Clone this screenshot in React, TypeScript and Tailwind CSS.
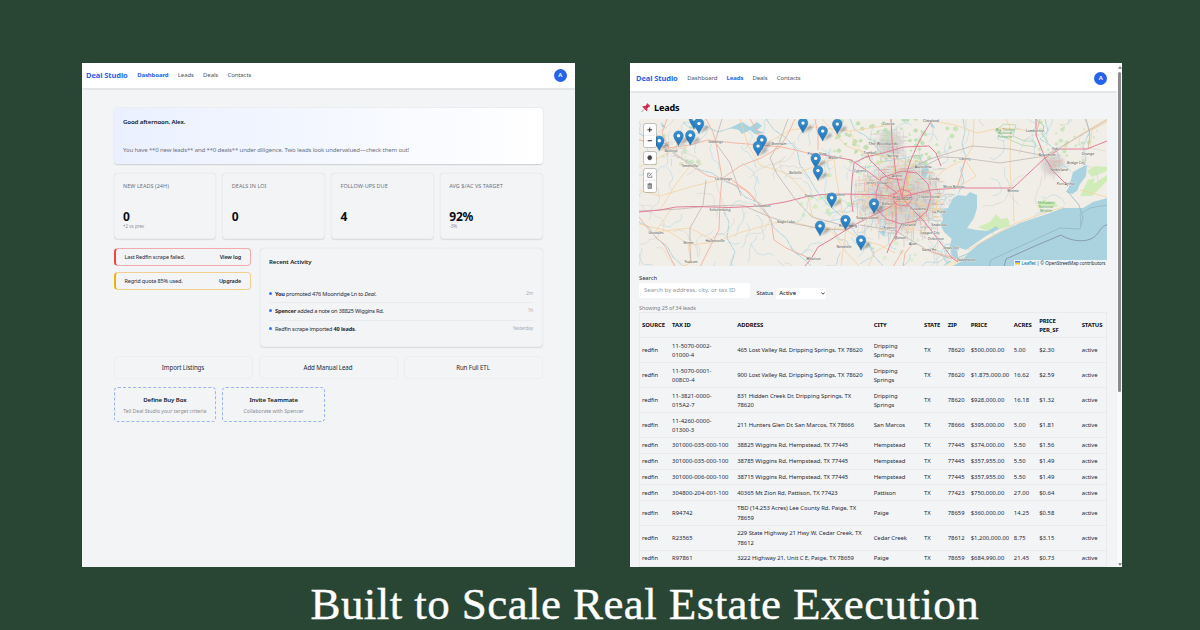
import React from "react";

/* ---------- shared header ---------- */

const NAV = ["Dashboard", "Leads", "Deals", "Contacts"];

function Header({ active, className, navGap }: { active: string; className: string; navGap: string }) {
  return (
    <header className={`flex shrink-0 items-center border-b border-[#e3e5e8] bg-white shadow-[0_0.5px_1px_rgba(0,0,0,0.06)] ${className}`}>
      <span className="text-[7.500px] font-bold tracking-[-0.080px] text-[#2563eb]">Deal Studio</span>
      <nav className={`ml-[9.500px] flex text-[6px] ${navGap}`}>
        {NAV.map((n) => (
          <span key={n} className={n === active ? "font-bold tracking-[-0.12px] text-[#2563eb]" : "tracking-[-0.1px] text-[#4b5563]"}>
            {n}
          </span>
        ))}
      </nav>
      <span className="ml-auto flex h-[12.6px] w-[12.6px] items-center justify-center rounded-full bg-[#2563eb] text-[6px] font-semibold text-white">
        A
      </span>
    </header>
  );
}

/* ---------- dashboard ---------- */

const STATS = [
  { label: "NEW LEADS (24H)", value: "0", note: "+2 vs prev" },
  { label: "DEALS IN LOI", value: "0", note: "" },
  { label: "FOLLOW-UPS DUE", value: "4", note: "" },
  { label: "AVG $/AC VS TARGET", value: "92%", note: "-3%" },
];

const CARD = "rounded-[4px] border border-[#eceef0] bg-[#f3f4f6] shadow-[0_0.7px_1.2px_rgba(0,0,0,0.11)]";

function Alert({ text, action, className }: { text: string; action: string; className: string }) {
  return (
    <div className={`flex h-[18px] items-center justify-between rounded-[4px] border border-l-2 pt-[1px] pr-[8.5px] pl-[9px] text-[5.500px] tracking-[-0.150px] text-[#1f2937] ${className}`}>
      <span>{text}</span>
      <span className="font-semibold">{action}</span>
    </div>
  );
}

function Activity({ children, when, last }: { children: React.ReactNode; when: string; last?: boolean }) {
  return (
    <li className={`flex h-[17.4px] items-center ${last ? "" : "border-b border-[#e9ebee]"}`}>
      <span className="mr-[2.6px] mb-[2px] h-[3.4px] w-[3.4px] rounded-full bg-[#3b6ff5]" />
      <span className="text-[5.6px] tracking-[-0.190px] text-[#1f2937]">{children}</span>
      <span className="mb-[1.5px] ml-auto text-[4.6px] tracking-[-0.080px] text-[#a6abb4]">{when}</span>
    </li>
  );
}

function Dashboard() {
  return (
    <section className="flex h-[504px] w-[493.5px] flex-col overflow-hidden bg-[#f3f4f6]">
      <Header active="Dashboard" className="h-[26px] pt-[0.500px] pr-[8.500px] pl-[4.5px]" navGap="gap-[9.3px]" />
      <div className="flex flex-col pt-[18.5px] pr-[32.5px] pl-[32px]">
        <div className="h-[56px] rounded-[4px] bg-linear-to-r from-[#eaf0ff] to-white px-[9.5px] shadow-[0_0.7px_1.4px_rgba(0,0,0,0.16)]">
          <p className="pt-[10px] text-[6.100px] leading-[8px] font-semibold tracking-[-0.120px] text-[#111827]">Good afternoon, Alex.</p>
          <p className="pt-[20px] text-[6px] leading-[8px] tracking-[-0.130px] text-[#6b7280]">
            You have **0 new leads** and **0 deals** under diligence. Two leads look undervalued—check them out!
          </p>
        </div>

        <div className="mt-[9px] grid grid-cols-4 gap-[6px]">
          {STATS.map((s) => (
            <div key={s.label} className={`h-[66px] px-[8.5px] ${CARD}`}>
              <p className="pt-[8.500px] text-[5.500px] leading-[8px] tracking-[0.030px] whitespace-nowrap text-[#6b7280]">{s.label}</p>
              <p className="pt-[19.500px] text-[12px] leading-[14px] font-bold tracking-[-0.2px] text-[#0b0f19]">{s.value}</p>
              <p className="text-[4.6px] leading-[5px] tracking-[-0.050px] text-[#8b919c]">{s.note}</p>
            </div>
          ))}
        </div>

        <div className="mt-[9px] grid grid-cols-[137px_283px] gap-[9px]">
          <div className="flex flex-col gap-[6px]">
            <Alert text="Last Redfin scrape failed." action="View log" className="border-[#f3a9ae] border-l-[#ef4444]" />
            <Alert text="Regrid quota 85% used." action="Upgrade" className="border-[#f2cf8c] border-l-[#eab308]" />
          </div>
          <div className={`h-[99px] px-[8.5px] ${CARD}`}>
            <p className="pt-[9.500px] text-[6px] leading-[8px] font-semibold tracking-[-0.080px] text-[#111827]">Recent Activity</p>
            <ul className="pt-[20px]">
              <Activity when="2m"><b>You</b> promoted 476 Moonridge Ln to <i>Deal</i>.</Activity>
              <Activity when="1h"><b>Spencer</b> added a note on 38825 Wiggins Rd.</Activity>
              <Activity when="Yesterday" last>Redfin scrape imported <b>40 leads</b>.</Activity>
            </ul>
          </div>
        </div>

        <div className="mt-[9px] grid grid-cols-3 gap-[6px]">
          {["Import Listings", "Add Manual Lead", "Run Full ETL"].map((t) => (
            <button key={t} className="h-[23px] rounded-[4px] border border-[#eceef0] pt-[0.500px] text-[6.2px] tracking-[-0.120px] text-[#1f2937]">
              {t}
            </button>
          ))}
        </div>

        <div className="mt-[8.5px] grid grid-cols-4 gap-[6px] text-center">
          {[
            ["Define Buy Box", "Tell Deal Studio your target criteria"],
            ["Invite Teammate", "Collaborate with Spencer"],
          ].map(([t, d]) => (
            <div key={t} className="h-[35px] rounded-[4px] border border-dashed border-[#9db4f7] pt-[7.5px] whitespace-nowrap">
              <p className="text-[6.1px] leading-[8px] font-semibold tracking-[-0.120px] text-[#111827]">{t}</p>
              <p className="pt-[3.5px] text-[5.2px] leading-[8px] tracking-[-0.04px] text-[#868c97]">{d}</p>
            </div>
          ))}
        </div>
      </div>
    </section>
  );
}

/* ---------- map ---------- */

const PINS: [number, number][] = [
  [694, 129], [699, 133.5], [803, 133], [837.3, 134], [822.7, 141], [659.3, 150.7], [690.3, 145.2],
  [678.5, 145.7], [761.8, 149.8], [758, 156], [815.7, 168.3], [818, 180.5], [831.7, 207.7],
  [874, 213.5], [845.5, 230], [820, 235.8], [861, 250.2],
];

const LABELS: [number, number, string, number?][] = [
  [883, 144.5, "The Woodlands", 4], [671, 152.3, "Bastrop"], [690, 166.5, "Smithville"], [715.5, 142.5, "Giddings"],
  [723.5, 179.5, "La Grange"], [779, 144.5, "Brenham"], [817, 154.5, "Prairie View"], [833.5, 158.5, "Waller"],
  [795.5, 174, "Bellville"], [870, 154, "Tomball"], [892.5, 157, "Spring"], [860, 172, "Cypress"], [888.5, 124.5, "Conroe"],
  [931, 122, "Cleveland"], [923, 167.5, "Atascocita"], [897, 176.5, "Aldine"], [934, 179.5, "Crosby"], [965, 159.5, "Liberty"],
  [954, 187.5, "Mont Belvieu"], [1013, 191.5, "Winnie"], [1035, 132, "Lumberton"], [1047, 156, "Beaumont"], [1056, 150, "Vidor"],
  [1088, 155, "Orange"], [1076, 163.5, "Bridge City"], [1059, 171, "Nederland"], [1066, 185, "Port Arthur"],
  [720, 210.5, "Schulenburg"], [762, 206.5, "Columbus"], [809, 197, "Sealy"], [836, 196, "Brookshire"], [786, 222.5, "Eagle Lake"],
  [656, 233.5, "Gonzales"], [688.5, 244, "Shiner"], [715, 242, "Hallettsville"], [691, 262.5, "Yoakum"],
  [844, 248, "Needville"], [813.5, 259.5, "Wharton"], [848, 227, "Rosenberg"], [867, 218.5, "Sugar Land", 4],
  [902, 200, "Houston", 4.8], [918, 209.5, "Pasadena"], [929, 197.5, "Channelview"], [939, 212.5, "La Porte"],
  [908, 226, "Pearland"], [939, 226, "Seabrook"], [930, 233.5, "League City"], [889, 229, "Fresno"], [936, 240, "Dickinson"],
  [900, 239, "Manvel"], [913, 245, "Alvin"], [929, 251, "Santa Fe"], [951, 249, "Texas City"], [966, 260.5, "Galveston", 4],
  [877, 183.5, "Jersey Village"], [888, 205, "Bellaire"],
];

const MOTORWAYS = [
  "M639 212 L660 210 L676 207 L695 206.500 L730 207.500 L761 206 L785 202 L805 197 L822 194.500 L841 194 L872 194.500 L902 197 L930 190 L957 188 L1013 188 L1030 172 L1045 158 L1060 149 L1087 149 L1097 145 L1107 141",
  "M891 119 L892 140 L894 158 L896 175 L902 197 L912 209 L923 220 L937 238 L952 258 L958 262",
  "M932 120 L922 136 L916 148 L910 162 L905 180 L902 197 L890 207 L876 214 L858 223 L846 230 L830 240 L818 247 L811 259 L804 267",
  "M808 153 L830 156 L851 160 L866 170 L882 182 L897 193",
  "M902 171 L917 173 L928 184 L931 197 L927 211 L916 221 L901 224 L886 219 L877 209 L876 192 L881 178 Z",
  "M902 189 L910 192 L912 199 L908 205 L900 206 L894 202 L894 194 Z",
  "M853 212 L851 197 L852 180 L854 163 L866 157 L883 153 L904 147 L929 146 L936 153 L941 166",
  "M902 224 L890 245 L887 253", "M896 203 L896 240", "M902 180 L888 178 L870 160 L868 154", "M1036 119 L1036 135 L1045 158 L1054 172 L1068 186",
];
const TRUNKS = [
  "M668 148 L690 145 L708 140 L735 143 L761 145 L782 147 L808 153", "M639 140 L655 143 L672 151 L690 165 L708 176 L723 179 L745 190 L761 206",
  "M706 119 L713 132 L716 143 L719 160 L722 178 L720 200 L719 230 L712 243 L700 267", "M815 119 L818 135 L818 150",
  "M667 119 L662 133 L669 148", "M732 180 L750 193 L771 220 L774 240 L786 248 L809 258", "M720 180 L740 166 L761 158 L780 147 L788 134 L795 119",
  "M639 217 L650 231 L665 246 L675 267", "M750 119 L758 132 L762 146", "M903 250 L893 267 M912 245 L905 253 L903 267", "M1036 135 L1040 119",
  "M929 251 L955 258", "M957 188 L962 172 L965 160",
];
const YELLOWS = [
  "M639 190 L660 196 L690 187 L723 179", "M655 232 L690 228 L716 242", "M655 232 L665 218 L672 208", "M716 242 L742 232 L774 223",
  "M774 223 L790 221 L812 227 L845 229", "M688 245 L691 263 L680 267", "M740 119 L748 145 L760 165 L788 174 L808 196 L812 215 L834 234 L846 252 L860 267",
  "M762 146 L790 130 L815 127 L850 131 L891 125", "M834 159 L836 176 L839 194 L846 229", "M846 230 L843 250 L841 267", "M795 174 L818 165 L834 159",
  "M932 121 L955 125 L977 133 L1000 128 L1036 131", "M934 179 L947 168 L965 159 L973 146 L974 119", "M1011 187 L1010 160 L1011 130 L1006 119",
  "M1013 188 L1014 222", "M957 188 L976 176 L965 160", "M895 253 L880 245 L861 240 L846 230", "M896 240 L875 252 L868 267", "M639 167 L655 160 L671 151 L690 133 L706 119",
  "M690 166 L676 184 L660 210", "M1060 149 L1081 134 L1107 119", "M1080 190 L1107 197", "M1090 149 L1092 130 L1107 122",
  "M850 131 L856 145 L866 157 M822 119 L846 146 L870 154 L893 158 L923 168", "M968 250 L1014 224 L1050 211 L1064 207",
  "M639 224 L668 231 L690 245 L716 242",
];
const BROWNS = [
  "M885 180 L930 159 L972 146 L1010 149 L1045 156 L1066 144 L1107 120", "M923 167 L942 157 L963 158 L1000 163 L1045 156", "M845 230 L822 229 L786 222 L770 217 L742 205 L708 206 L680 209 L639 211",
  "M788 119 L779 143 L770 158 L777 174 L795 199 L812 217 L845 226", "M706 180 L703 205 L690 228 L690 245 L691 263", "M722 119 L715 142 L730 163 L741 196",
  "M860 225 L896 231 L929 251 L952 259", "M1086 119 L1090 135 L1088 149",
];
const WATERLINES = [
  "M639 133 L650 140 L660 138 L668 147 L676 156 L690 162 L700 170 L712 173 L722 180 L736 186 L745 197 L760 203 L768 215 L774 228 L786 238 L793 251 L805 260 L812 267",
  "M766 119 L774 130 L785 137 L797 150 L800 165 L808 176 L816 190 L826 203 L838 213 L848 222 L856 234 L868 243 L874 256 L884 267",
  "M963 119 L965 131 L962 144 L966 158 L961 171 L964 181 L958 194", "M1045 119 L1048 131 L1040 139 L1050 145 L1058 153 L1060 163 L1071 171",
  "M1085 119 L1090 131 L1083 146 L1086 160 L1083 168", "M639 222 L650 228 L656 238 L667 246 L673 257 L684 267", "M730 267 L735 252 L727 238 L729 222 L724 212",
  "M683 122 L690 128 L705 126 L718 132 L731 128 L748 131", "M850 119 L855 130 L866 136 L878 149 L887 161 L905 158 L918 155 L926 168 L935 183 L940 198",
];

/* deterministic pseudo random source for the minor streams and streets */
function rng(seed: number) {
  let s = seed;
  return () => {
    s = (s * 16807) % 2147483647;
    return s / 2147483647;
  };
}

function wiggles(seed: number, count: number, steps: number, len: number, cx: number, cy: number, rx: number, ry: number) {
  const r = rng(seed);
  let d = "";
  for (let i = 0; i < count; i++) {
    let x = cx + (r() - 0.5) * 2 * rx;
    let y = cy + (r() - 0.5) * 2 * ry;
    let a = r() * Math.PI * 2;
    d += `M${x.toFixed(1)} ${y.toFixed(1)}`;
    for (let k = 0; k < steps; k++) {
      a += (r() - 0.5) * 1.7;
      x += Math.cos(a) * len;
      y += Math.sin(a) * len;
      d += `L${x.toFixed(1)} ${y.toFixed(1)}`;
    }
  }
  return d;
}

function streets(seed: number, count: number, cx: number, cy: number, spread: number) {
  const r = rng(seed);
  let d = "";
  for (let i = 0; i < count; i++) {
    const a = r() * Math.PI * 2;
    const q = Math.pow(r(), 0.8) * spread;
    const x = cx + Math.cos(a) * q;
    const y = cy + Math.sin(a) * q * 0.85;
    const l = 3 + r() * 8;
    d += r() > 0.5 ? `M${x.toFixed(1)} ${y.toFixed(1)}h${l.toFixed(1)}` : `M${x.toFixed(1)} ${y.toFixed(1)}v${l.toFixed(1)}`;
  }
  return d;
}

function blobs(seed: number, count: number, cx: number, cy: number, rx: number, ry: number) {
  const r = rng(seed);
  return Array.from({ length: count }, () => {
    const x = cx + (r() - 0.5) * 2 * rx;
    const y = cy + (r() - 0.5) * 2 * ry;
    const s = 0.8 + r() * 2.2;
    return `M${x.toFixed(1)} ${y.toFixed(1)}l${s.toFixed(1)} ${(-s * 0.6).toFixed(1)}l${(s * 0.9).toFixed(1)} ${s.toFixed(1)}l${(-s * 0.8).toFixed(1)} ${(s * 0.9).toFixed(1)}l${(-s * 1.2).toFixed(1)} ${(-s * 0.4).toFixed(1)}z`;
  }).join("");
}

function Pin({ x, y }: { x: number; y: number }) {
  return (
    <g transform={`translate(${x} ${y})`}>
      <path d="M0 0 L5 -6 C8 -9 11 -7 8 -4 Z" fill="#000" opacity="0.3" filter="url(#soft)" />
      <path d="M0 0 C-1.200 -3.600 -4.800 -6.600 -4.800 -10 A4.800 4.800 0 0 1 4.800 -10 C4.800 -6.600 1.200 -3.600 0 0 Z" fill="url(#pin)" stroke="#2b74ad" strokeWidth="0.5" />
      <circle cy="-9.900" r="1.700" fill="#fff" />
    </g>
  );
}

function MapCanvas() {
  return (
    <svg viewBox="639 119 468 147" className="block h-[147px] w-[468px]" fill="none" strokeLinejoin="round">
      <defs>
        <linearGradient id="pin" x1="0" y1="0" x2="0" y2="1">
          <stop offset="0" stopColor="#3b92d2" />
          <stop offset="1" stopColor="#1f73b8" />
        </linearGradient>
        <filter id="soft" x="-50%" y="-50%" width="200%" height="200%">
          <feGaussianBlur stdDeviation="0.8" />
        </filter>
        <radialGradient id="urban">
          <stop offset="0" stopColor="#cbc8c5" />
          <stop offset="0.6" stopColor="#dad6d2" stopOpacity="0.85" />
          <stop offset="1" stopColor="#f1eee8" stopOpacity="0" />
        </radialGradient>
      </defs>
      <rect x="639" y="119" width="468" height="147" fill="#f1eee8" />
      <ellipse cx="900" cy="197" rx="54" ry="46" fill="url(#urban)" />
      <ellipse cx="890" cy="145" rx="18" ry="20" fill="url(#urban)" />
      <ellipse cx="1052" cy="164" rx="16" ry="16" fill="url(#urban)" />
      <path d={blobs(11, 60, 880, 140, 45, 22)} fill="#c3e0b5" />
      <path d={blobs(21, 26, 865, 180, 42, 30)} fill="#d0ebbb" />
      <path d={blobs(31, 26, 930, 155, 30, 32)} fill="#c8e3b9" />
      <path d={blobs(41, 22, 672, 146, 28, 22)} fill="#d3e6c4" />
      <path d={blobs(51, 26, 1070, 140, 32, 20)} fill="#cde5bd" />
      <path d={blobs(61, 16, 815, 205, 16, 10)} fill="#d7ecc9" />
      <path d={blobs(71, 12, 905, 250, 40, 14)} fill="#dcecce" />
      <path d="M978 227 L990 222 L996 214 L1001 219 L1008 218 L1010 226 L990 232 Z M1037 206 L1044 199 L1049 203 L1055 201 L1058 207 Z M1080 196 L1088 180 L1095 178 L1093 184 L1107 175 L1107 181 L1092 196 Z M1087 171 L1095 166 L1107 167 L1107 171 L1092 177 Z" fill="#d0ecb9" />
      <path d="M995 131 L1004 124 L1016 125 L1013 136 L1024 141 L1034 141 L1036 147 L1022 145 L1008 139 Z" stroke="#b4dab3" strokeWidth="0.900" />
      <path d="M1036 119 L1044 126 L1042 134 L1048 142" stroke="#a0d4a5" strokeWidth="1" />
      <path d={wiggles(5, 90, 9, 3.2, 873, 192, 234, 73)} stroke="#b4d8e3" strokeWidth="0.600" />
      <path d={wiggles(97, 26, 10, 3, 900, 235, 60, 34)} stroke="#aad4e1" strokeWidth="0.700" />
      <path d={wiggles(7, 42, 8, 5, 873, 192, 234, 73)} stroke="#d6d3cd" strokeWidth="0.600" />
      {WATERLINES.map((d) => <path key={d} d={d} stroke="#a3d1de" strokeWidth="0.900" strokeDasharray="5 0.6 2 0.4" />)}
      <path d="M742 122 L750 127 L757 122 L762 126 L757 130 L765 133 L755 134 L750 130 L742 134 L738 129 L730 128 Z M922 168 L927 164 L929 171 L925 178 L921 175 Z M930 120 L935 128 L931 127 Z M880 232 L886 230 L884 236 Z M661 122 L666 128 L662 127 Z" fill="#a7d2df" />
      <path d="M953 198 L958 195 L966 196 L970 192 L977 195 L977 208 L974 218 L967 228 L976 230 L988 231 L996 226 L999 229 L986 236 L976 243 L966 250 L957 247 L958 257 L968 253 L980 243 L1000 232 L1020 223 L1050 213 L1063 208 L1083 208 L1093 202 L1107 198 L1107 267 L942 267 L948 261 L957 262 L951 254 L950 246 L952 239 L944 232 L940 224 L943 220 L941 210 L948 208 Z" fill="#aad3df" />
      <path d="M1069 187 L1073 172 L1080 168 L1087 165 L1086 176 L1080 184 L1077 191 L1072 194 L1066 192 Z" fill="#aad3df" />
      <path d="M942 267 L952 261 L968 254 L960 262 L951 267 Z" fill="#f1e9cf" />
      <path d="M989 267 L991 260 L1010 251 L1034 240 L1060 228 L1080 229 L1083 218 L1079 205 L1068 192" stroke="#90aebf" strokeWidth="0.700" />
      <path d="M1004 267 L1006 259 L1035 246 L1061 235 C1070 241 1090 245 1098 233 C1101 228 1104 225 1107 225" stroke="#8793ad" strokeWidth="0.900" />
      <path d="M1081 226 L1080 214 L1090 208 L1107 205" stroke="#90aebf" strokeWidth="0.600" />
      <path d={streets(3, 340, 900, 196, 50)} stroke="#bfbbb8" strokeWidth="0.500" />
      <path d={streets(13, 130, 898, 196, 45)} stroke="#f4cf96" strokeWidth="0.700" />
      <path d={streets(23, 70, 898, 196, 38)} stroke="#ee9f93" strokeWidth="0.600" />
      <path d={streets(33, 50, 888, 143, 22)} stroke="#c9c6c2" strokeWidth="0.500" />
      <path d={streets(43, 30, 1052, 164, 13)} stroke="#dcbdb6" strokeWidth="0.500" />
      <path d={streets(53, 22, 670, 148, 14)} stroke="#c9c6c2" strokeWidth="0.500" />
      {YELLOWS.map((d) => <path key={d} d={d} stroke="#f6d2a0" strokeWidth="0.800" />)}
      {BROWNS.map((d) => <path key={d} d={d} stroke="#bbafa9" strokeWidth="0.700" />)}
      {TRUNKS.map((d) => <path key={d} d={d} stroke="#f4b09e" strokeWidth="0.900" />)}
      {MOTORWAYS.map((d) => <path key={d} d={d} stroke="#e27f97" strokeWidth="1" />)}
      <g textAnchor="middle" fill="#4a4a4a" className="font-['Noto_Sans']">
        {LABELS.map(([x, y, t, s]) => (
          <text key={t} x={x} y={y} fontSize={s ?? 3.5} stroke="#f7f5f0" strokeWidth="0.500" paintOrder="stroke">{t}</text>
        ))}
        <g fill="#55a455" fontSize="3.600">
          <text x="1005" y="130.500">Big Thicket</text>
          <text x="1005" y="134">National</text>
          <text x="1005" y="137.500">Preserve</text>
          <text x="1046" y="204">McFaddin</text>
          <text x="1046" y="208">National</text>
          <text x="1046" y="212">Wildlife</text>
        </g>
      </g>
      {PINS.map(([x, y]) => <Pin key={`${x}-${y}`} x={x} y={y} />)}
    </svg>
  );
}

const CTRL = "flex w-[11.5px] flex-col items-center rounded-[1.5px] bg-white shadow-[0_0_0_0.7px_rgba(0,0,0,0.25)] text-[#222]";

function LeadMap() {
  return (
    <div className="relative h-[147px] w-[468px] overflow-hidden">
      <MapCanvas />
      <div className="absolute top-[5px] left-[5px] flex flex-col gap-[5.5px]">
        <div className={`h-[22.5px] ${CTRL}`}>
          <svg viewBox="0 0 12 22.500" className="h-full w-full" stroke="#222" strokeWidth="1">
            <path d="M3.600 5.600h4.800M6 3.200v4.800M3.800 17h4.400" />
            <path d="M0 11.300h12" stroke="#ccc" strokeWidth="0.500" />
          </svg>
        </div>
        <div className={`h-[11.5px] ${CTRL}`}>
          <svg viewBox="0 0 12 12" className="h-full w-full">
            <path d="M4.800 3.900 H7.200 L8.300 6 L7.200 8.100 H4.800 L3.700 6 Z" fill="#444" stroke="#444" strokeWidth="0.600" strokeLinejoin="round" />
          </svg>
        </div>
        <div className={`h-[22.5px] ${CTRL}`}>
          <svg viewBox="0 0 12 22.500" className="h-full w-full" fill="none" stroke="#555" strokeWidth="0.700">
            <path d="M8.200 6.200v2H3.900V3.900h2.600M5.500 6.800 8.400 3.500" />
            <path d="M0 11.300h12" stroke="#ccc" strokeWidth="0.500" />
            <path d="M4.200 15.600h3.600v4.200H4.200zM3.600 15.100h4.800M5.400 16v3.400M6.600 16v3.400M5.300 14.400h1.400" />
          </svg>
        </div>
      </div>
      <div className="absolute right-0 bottom-0 flex h-[6.3px] items-center bg-white/80 px-[1.5px] text-[4.7px] leading-none tracking-[-0.120px] whitespace-nowrap text-[#333]">
        <svg viewBox="0 0 12 8" className="mr-[1.5px] h-[3.5px] w-[5px]">
          <path fill="#4c7be1" d="M0 0h12v4H0z" />
          <path fill="#ffd500" d="M0 4h12v3H0z" />
          <path fill="#e0bc00" d="M0 7h12v1H0z" />
        </svg>
        <span className="text-[#0078a8]">Leaflet</span>
        <span>&nbsp;| © OpenStreetMap contributors</span>
      </div>
    </div>
  );
}

/* ---------- leads table ---------- */

const HEAD = ["SOURCE", "TAX ID", "ADDRESS", "CITY", "STATE", "ZIP", "PRICE", "ACRES", "PRICE PER_SF", "STATUS"];

const ROWS: string[][] = [
  ["11-5070-0002-\n01000-4", "465 Lost Valley Rd, Dripping Springs, TX 78620", "Dripping\nSprings", "78620", "$500,000.00", "5.00", "$2.30"],
  ["11-5070-0001-\n008C0-4", "900 Lost Valley Rd, Dripping Springs, TX 78620", "Dripping\nSprings", "78620", "$1,875,000.00", "16.62", "$2.59"],
  ["11-3821-0000-\n015A2-7", "831 Hidden Creek Dr, Dripping Springs, TX\n78620", "Dripping\nSprings", "78620", "$928,000.00", "16.18", "$1.32"],
  ["11-4260-0000-\n01300-3", "211 Hunters Glen Dr, San Marcos, TX 78666", "San Marcos", "78666", "$395,000.00", "5.00", "$1.81"],
  ["301000-035-000-100", "38825 Wiggins Rd, Hempstead, TX 77445", "Hempstead", "77445", "$374,000.00", "5.50", "$1.56"],
  ["301000-035-000-100", "38785 Wiggins Rd, Hempstead, TX 77445", "Hempstead", "77445", "$357,955.00", "5.50", "$1.49"],
  ["301000-006-000-100", "38715 Wiggins Rd, Hempstead, TX 77445", "Hempstead", "77445", "$357,955.00", "5.50", "$1.49"],
  ["304800-204-001-100", "40365 Mt Zion Rd, Pattison, TX 77423", "Pattison", "77423", "$750,000.00", "27.00", "$0.64"],
  ["R94742", "TBD (14.253 Acres) Lee County Rd, Paige, TX\n78659", "Paige", "78659", "$360,000.00", "14.25", "$0.58"],
  ["R23565", "229 State Highway 21 Hwy W, Cedar Creek, TX\n78612", "Cedar Creek", "78612", "$1,200,000.00", "8.75", "$3.15"],
  ["R97861", "3222 Highway 21, Unit C E, Paige, TX 78659", "Paige", "78659", "$684,990.00", "21.45", "$0.73"],
];

const COLS = "grid grid-cols-[30px_65.200px_136.500px_50.300px_23.700px_23px_43.200px_25.300px_42.500px_1fr] items-center pt-[1px] pl-[2px] leading-[9.300px]";

function LeadsTable() {
  return (
    <div className="w-[468px] border-x border-t border-[#e9ebee]">
      <div className={`h-[25px] border-b border-[#e9ebee] text-[5.900px] font-bold tracking-[-0.050px] text-[#0b0f19] ${COLS}`}>
        {HEAD.map((h) => (
          <span key={h} className={h === "PRICE PER_SF" ? "w-[24px]" : "whitespace-nowrap"}>{h}</span>
        ))}
      </div>
      {ROWS.map(([tax, addr, city, zip, price, acres, sf], i) => {
        const tall = [tax, addr, city].some((v) => v.includes("\n"));
        return (
          <div key={i} className={`border-b border-[#e9ebee] text-[5.900px] whitespace-pre text-[#1f2937] ${tall ? "h-[25px]" : "h-[15.700px]"} ${COLS}`}>
            {["redfin", tax, addr, city, "TX", zip, price, acres, sf, "active"].map((v, k) => (
              <span key={k} className={k === 1 || k === 6 ? "tracking-[0.010px]" : k === 5 || k === 7 || k === 8 ? "tracking-[0.020px]" : "tracking-[-0.050px]"}>{v}</span>
            ))}
          </div>
        );
      })}
    </div>
  );
}

function Pushpin() {
  return (
    <svg viewBox="0 0 20 20" className="h-[9.500px] w-[9.500px]">
      <path d="M7.500 12.500 1 19" stroke="#8d99a6" strokeWidth="1.600" strokeLinecap="round" />
      <path d="M2.500 7.800 C5 6 7.500 6.300 9 7 L12 3.500 C11.600 2 12.200 0.800 13.500 0.600 L19.400 6.500 C19.200 7.800 18 8.400 16.500 8 L13 11 C13.700 12.500 14 15 12.200 17.500 Z" fill="#dd2e52" />
      <path d="M12 3.500 L16.500 8 L13 11 L9 7 Z" fill="#c92750" />
    </svg>
  );
}

function Leads() {
  return (
    <section className="flex h-[504px] w-[492px] overflow-hidden bg-[#f3f4f6]">
      <div className="flex w-[487px] flex-col overflow-hidden">
        <Header active="Leads" className="h-[29px] pt-[2.500px] pr-[10px] pl-[6px]" navGap="gap-[9.2px]" />
        <div className="flex flex-col pl-[9px]">
          <h1 className="flex h-[27px] items-center gap-[4px] pt-[3.500px] pl-[1.5px] text-[9px] font-bold tracking-[-0.1px] text-black">
            <Pushpin />
            Leads
          </h1>
          <LeadMap />
          <div className="flex h-[33px] items-end gap-[6.500px] text-[5.800px] text-[#1f2937]">
            <label className="flex flex-col gap-[0.500px] pb-[1.500px] leading-[8px] tracking-[-0.050px]">
              Search
              <span className="flex h-[15px] w-[111px] items-center rounded-[2px] bg-white pl-[5px] text-[6px] tracking-[0.010px] text-[#9298a3]">
                Search by address, city, or tax ID
              </span>
            </label>
            <label className="flex items-center gap-[3px]">
              <span className="tracking-[-0.05px]">Status</span>
              <span className="flex h-[11.500px] w-[50px] items-center justify-between bg-white pr-[1.500px] pl-[3px] text-[6px] text-black">
                Active
                <svg viewBox="0 0 8 6" className="h-[3px] w-[4px]" fill="none" stroke="#222" strokeWidth="1.600">
                  <path d="M1 1l3 3.500L7 1" />
                </svg>
              </span>
            </label>
          </div>
          <p className="pt-[5.500px] pb-[0.300px] text-[5.400px] leading-[7.500px] tracking-[-0.060px] text-[#7a808b]">Showing 25 of 34 leads</p>
          <LeadsTable />
        </div>
      </div>
      <div className="flex w-[5px] flex-col items-center justify-between bg-[#fafafa] py-[3px]">
        <div className="flex flex-col items-center gap-[2.500px]">
          <svg viewBox="0 0 6 4" className="h-[3px] w-[4px]"><path d="M3 0l3 4H0z" fill="#777" /></svg>
          <div className="h-[320px] w-[3px] rounded-full bg-[#8b8b8b]" />
        </div>
        <svg viewBox="0 0 6 4" className="mb-[-2px] h-[3px] w-[4px]"><path d="M3 4l3-4H0z" fill="#777" /></svg>
      </div>
    </section>
  );
}

export default function App() {
  return (
    <main className="flex h-[630px] w-[1200px] flex-col overflow-hidden bg-[#294634] font-['Noto_Sans','Open_Sans',sans-serif]">
      <div className="flex gap-[55px] pt-[63px] pl-[81.500px]">
        <Dashboard />
        <Leads />
      </div>
      <p className="pt-[10px] pl-[310.500px] font-['Liberation_Serif',serif] text-[45px] leading-[54px] tracking-[0.420px] whitespace-nowrap text-white [-webkit-text-stroke:0.400px_white]">
        Built to Scale Real Estate Execution
      </p>
    </main>
  );
}
